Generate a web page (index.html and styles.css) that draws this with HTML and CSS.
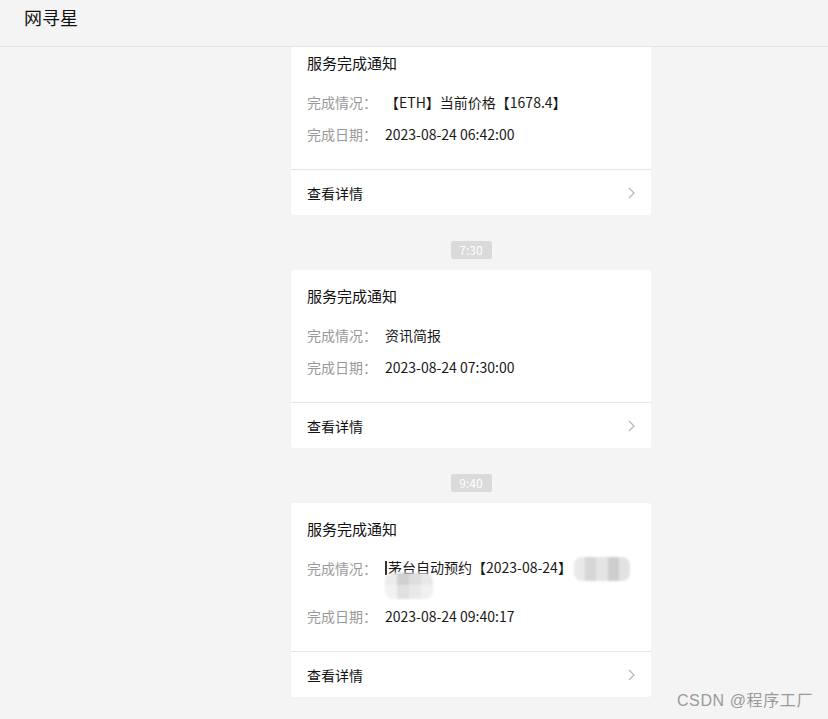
FILE: index.html
```html
<!DOCTYPE html>
<html lang="zh-CN">
<head>
  <meta charset="UTF-8">
  <title>网寻星</title>
  <link rel="stylesheet" href="styles.css">
</head>
<body>
  <div class="top-bar">
    <h1 class="top-title">网寻星</h1>
  </div>
  <div class="chat">
    <div class="msg-list">
      <div class="card first">
        <div class="card-title">服务完成通知</div>
        <div class="card-body">
          <div class="row"><span class="label">完成情况：</span><span class="value">【ETH】当前价格【1678.4】</span></div>
          <div class="row"><span class="label">完成日期：</span><span class="value">2023-08-24 06:42:00</span></div>
        </div>
        <div class="card-foot">
          <span>查看详情</span>
          <svg class="chevron" width="7" height="12" viewBox="0 0 7 12"><polyline points="1,1 6,6 1,11" fill="none" stroke="#b8b8b8" stroke-width="1.3"/></svg>
        </div>
      </div>

      <div class="time"><span>7:30</span></div>
      <div class="card">
        <div class="card-title">服务完成通知</div>
        <div class="card-body">
          <div class="row"><span class="label">完成情况：</span><span class="value">资讯简报</span></div>
          <div class="row"><span class="label">完成日期：</span><span class="value">2023-08-24 07:30:00</span></div>
        </div>
        <div class="card-foot">
          <span>查看详情</span>
          <svg class="chevron" width="7" height="12" viewBox="0 0 7 12"><polyline points="1,1 6,6 1,11" fill="none" stroke="#b8b8b8" stroke-width="1.3"/></svg>
        </div>
      </div>

      <div class="time"><span>9:40</span></div>
      <div class="card">
        <div class="card-title">服务完成通知</div>
        <div class="card-body">
          <div class="row"><span class="label">完成情况：</span><span class="value wrap"><span class="cut"></span>茅台自动预约【2023-08-24】<span class="mosaic m1"></span><span class="mosaic m2"></span></span></div>
          <div class="row"><span class="label">完成日期：</span><span class="value">2023-08-24 09:40:17</span></div>
        </div>
        <div class="card-foot">
          <span>查看详情</span>
          <svg class="chevron" width="7" height="12" viewBox="0 0 7 12"><polyline points="1,1 6,6 1,11" fill="none" stroke="#b8b8b8" stroke-width="1.3"/></svg>
        </div>
      </div>
    </div>
  </div>
  <div class="watermark">CSDN @程序工厂</div>
</body>
</html>
```

FILE: styles.css
```css
* {
  margin: 0;
  padding: 0;
  box-sizing: border-box;
}
body {
  font-family: "Microsoft YaHei", "Noto Sans CJK SC", sans-serif;
  background: #f4f4f4;
  color: #191919;
  height: 100vh;
  overflow: hidden;
  position: relative;
}
.top-bar {
  height: 47px;
  border-bottom: 1px solid #e2e2e2;
  padding: 5px 24px 0;
  background: #f4f4f4;
}
.top-title {
  font-size: 18px;
  font-weight: normal;
  line-height: 24px;
  color: #111;
}
.chat {
  height: calc(100vh - 47px);
  overflow: hidden;
}
.msg-list {
  width: 360px;
  margin-left: 291px;
}
.card {
  background: #fff;
  border-radius: 3px;
}
.card.first {
  margin-top: -10px;
}
.card-title {
  padding: 16px 16px 0;
  font-size: 15px;
  line-height: 20px;
  color: #111;
}
.card-body {
  padding: 20px 16px 26px;
  display: flex;
  flex-direction: column;
  gap: 14px;
  border-bottom: 1px solid #e6e6e6;
}
.row {
  display: flex;
  font-size: 14px;
  line-height: 18px;
}
.label {
  width: 78px;
  flex-shrink: 0;
  color: #999;
}
.value {
  flex: 1;
  color: #191919;
}
.value.wrap {
  line-height: 17px;
}
.cut {
  display: inline-block;
  width: 2px;
  height: 14px;
  background: #333;
  vertical-align: -2px;
  margin-right: 1px;
}
.mosaic {
  display: inline-block;
  height: 24px;
  margin: -8px 0;
  vertical-align: middle;
  filter: blur(1px);
  border-radius: 8px;
}
.m1 {
  width: 56px;
  margin-left: 2px;
  background: linear-gradient(90deg, #e9e9e9 0 20%, #d6d6d6 20% 40%, #e4e4e4 40% 60%, #cdcdcd 60% 80%, #e2e2e4 80%);
}
.m2 {
  width: 48px;
  height: 26px;
  background:
    linear-gradient(180deg, transparent 0 45%, rgba(255, 255, 255, 0.35) 45%),
    linear-gradient(90deg, #ececec 0 25%, #d0d0d0 25% 50%, #dedede 50% 75%, #e8e8e8 75%);
}
.card-foot {
  height: 45px;
  padding: 0 16px;
  display: flex;
  align-items: center;
  justify-content: space-between;
  font-size: 14px;
  color: #111;
}
.time {
  text-align: center;
  margin: 26px 0 11px;
  height: 18px;
  font-size: 12px;
  line-height: 18px;
}
.time span {
  display: inline-block;
  vertical-align: top;
  background: #dadada;
  color: #fff;
  padding: 0 8px;
  border-radius: 2px;
  width: 41px;
}
.watermark {
  position: absolute;
  right: 15px;
  bottom: 8px;
  font-size: 16px;
  letter-spacing: 0.6px;
  color: #9a9a9a;
  font-family: "Liberation Sans", "Noto Sans CJK SC", sans-serif;
}
```
